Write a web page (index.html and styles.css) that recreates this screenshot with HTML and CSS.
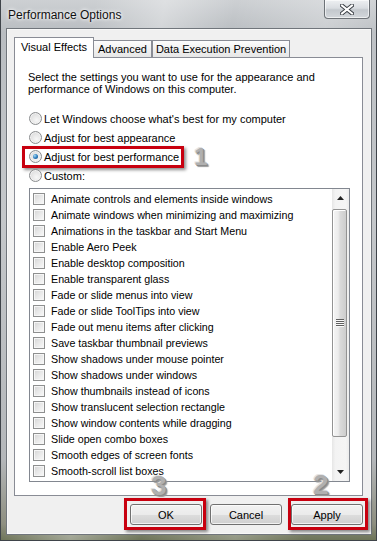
FILE: index.html
```html
<!DOCTYPE html>
<html lang="en">
<head>
<meta charset="utf-8">
<title>Performance Options</title>
<link rel="stylesheet" href="styles.css">
</head>
<body>
<div class="window">
  <div class="titlebar">
    <span class="title">Performance Options</span>
    <div class="close">
      <svg width="14" height="11" viewBox="0 0 14 11">
        <path d="M2 1.5 L12 9.5 M12 1.5 L2 9.5" stroke="#3a3f45" stroke-width="4" stroke-linecap="square" fill="none"/>
        <path d="M2 1.5 L12 9.5 M12 1.5 L2 9.5" stroke="#ffffff" stroke-width="2" stroke-linecap="square" fill="none"/>
      </svg>
    </div>
  </div>
  <div class="client">
    <div class="tabs">
      <div class="tab tab-active tab-visual">Visual Effects</div>
      <div class="tab tab-advanced">Advanced</div>
      <div class="tab tab-dep">Data Execution Prevention</div>
    </div>
    <div class="panel">
      <p class="intro">Select the settings you want to use for the appearance and<br>performance of Windows on this computer.</p>
      <div class="radios">
        <label class="radio"><span class="rb"></span>Let Windows choose what's best for my computer</label>
        <label class="radio"><span class="rb"></span>Adjust for best appearance</label>
        <label class="radio radio-hl"><span class="rb rb-on"></span>Adjust for best performance</label>
        <label class="radio"><span class="rb"></span>Custom:</label>
      </div>
      <div class="listbox">
        <ul class="items">
          <li class="item"><span class="cb"></span>Animate controls and elements inside windows</li>
          <li class="item"><span class="cb"></span>Animate windows when minimizing and maximizing</li>
          <li class="item"><span class="cb"></span>Animations in the taskbar and Start Menu</li>
          <li class="item"><span class="cb"></span>Enable Aero Peek</li>
          <li class="item"><span class="cb"></span>Enable desktop composition</li>
          <li class="item"><span class="cb"></span>Enable transparent glass</li>
          <li class="item"><span class="cb"></span>Fade or slide menus into view</li>
          <li class="item"><span class="cb"></span>Fade or slide ToolTips into view</li>
          <li class="item"><span class="cb"></span>Fade out menu items after clicking</li>
          <li class="item"><span class="cb"></span>Save taskbar thumbnail previews</li>
          <li class="item"><span class="cb"></span>Show shadows under mouse pointer</li>
          <li class="item"><span class="cb"></span>Show shadows under windows</li>
          <li class="item"><span class="cb"></span>Show thumbnails instead of icons</li>
          <li class="item"><span class="cb"></span>Show translucent selection rectangle</li>
          <li class="item"><span class="cb"></span>Show window contents while dragging</li>
          <li class="item"><span class="cb"></span>Slide open combo boxes</li>
          <li class="item"><span class="cb"></span>Smooth edges of screen fonts</li>
          <li class="item"><span class="cb"></span>Smooth-scroll list boxes</li>
        </ul>
        <div class="scrollbar">
          <div class="sb-btn"><svg width="7" height="4" viewBox="0 0 7 4"><path d="M0 4 L3.5 0 L7 4 Z" fill="#222"/></svg></div>
          <div class="thumb"><span class="grip"></span></div>
          <div class="track"></div>
          <div class="sb-btn"><svg width="7" height="4" viewBox="0 0 7 4"><path d="M0 0 L7 0 L3.5 4 Z" fill="#222"/></svg></div>
        </div>
      </div>
    </div>
    <div class="buttons">
      <button class="btn btn-ok">OK</button>
      <button class="btn">Cancel</button>
      <button class="btn btn-apply">Apply</button>
    </div>
  </div>
  <span class="mark mark-1">1</span>
  <span class="mark mark-2">2</span>
  <span class="mark mark-3">3</span>
</div>
</body>
</html>
```
FILE: styles.css
```css
* { box-sizing: border-box; }
html, body { margin: 0; padding: 0; }
body {
  width: 377px;
  height: 541px;
  overflow: hidden;
  font-family: "Liberation Sans", Arial, sans-serif;
  font-size: 11px;
  color: #000;
  background: #5d6650;
}
.window {
  position: relative;
  width: 377px;
  height: 541px;
  border: 1px solid #3f444a;
  border-top: none;
  padding: 0 5px 6px 6px;
  display: flex;
  flex-direction: column;
  background:
    linear-gradient(100deg, rgba(255,255,255,0) 20%, rgba(255,255,255,0.35) 35%, rgba(255,255,255,0) 50%, rgba(255,255,255,0.25) 70%, rgba(255,255,255,0) 85%),
    linear-gradient(180deg, #cdd0d3 0%, #b9bdc1 6%, #c4c7ca 40%, #b4b7ba 85%, #8e8f80 97%, #6d7458 100%);
}
.titlebar {
  height: 29px;
  flex: none;
  display: flex;
  align-items: flex-start;
  justify-content: space-between;
}
.title {
  font-family: "Liberation Sans", Arial, sans-serif;
  font-size: 12px;
  line-height: 14px;
  margin: 8px 0 0 1px;
  color: #111;
  text-shadow: 0 0 5px #fff, 0 0 3px #fff;
}
.close {
  width: 46px;
  height: 19px;
  margin-right: 1px;
  border: 1px solid #6d7277;
  border-top: none;
  border-radius: 0 0 4px 4px;
  background: linear-gradient(180deg, #eef0f2 0%, #d9dde1 45%, #c3c8cd 55%, #d3d7db 100%);
  box-shadow: inset 0 0 0 1px rgba(255,255,255,0.6);
  display: flex;
  align-items: center;
  justify-content: center;
}
.client {
  flex: 1;
  background: #f0f0f0;
  border: 1px solid #f8f8f8;
  box-shadow: 0 0 0 1px #70757b;
  padding: 7px 7px 0 6px;
  display: flex;
  flex-direction: column;
}
.tabs {
  display: flex;
  align-items: flex-end;
  height: 20px;
  flex: none;
}
.tab {
  height: 17px;
  border: 1px solid #898c95;
  border-bottom: none;
  background: linear-gradient(180deg, #fdfdfd 0%, #f1f1f1 50%, #e6e6e6 100%);
  display: flex;
  align-items: center;
  justify-content: center;
  line-height: 14px;
  white-space: nowrap;
}
.tab-active {
  height: 21px;
  margin-bottom: -1px;
  position: relative;
  z-index: 1;
  background: #fff;
  padding-bottom: 2px;
}
.tab-visual { width: 80px; }
.tab-advanced { width: 58px; border-left: none; }
.tab-dep { width: 138px; margin-left: 0; }
.panel {
  height: 439px;
  flex: none;
  background: #fff;
  border: 1px solid #898c95;
  padding: 13px 12px 0 13px;
}
.intro {
  margin: 0;
  line-height: 12px;
  white-space: nowrap;
}
.radios {
  margin-top: 14px;
  display: flex;
  flex-direction: column;
  align-items: flex-start;
}
.radio {
  height: 19px;
  display: inline-flex;
  align-items: center;
  position: relative;
  white-space: nowrap;
}
.rb {
  width: 13px;
  height: 13px;
  margin: 0 2px 0 1px;
  border-radius: 50%;
  border: 1px solid #8b8d8f;
  background: radial-gradient(circle at 60% 65%, #f7f7f7 0%, #e4e4e4 55%, #cfcfcf 100%);
  box-shadow: inset 0 0 0 1px #f2f2f2;
  position: relative;
}
.rb-on::after {
  content: "";
  position: absolute;
  left: 3px;
  top: 3px;
  width: 5px;
  height: 5px;
  border-radius: 50%;
  background: radial-gradient(circle at 35% 35%, #a7d9f5 0%, #2e7fbf 50%, #164a80 100%);
}
.radio-hl::after {
  content: "";
  position: absolute;
  left: -6px;
  right: -5px;
  top: -1px;
  bottom: -2px;
  border: 3px solid #c8000f;
  box-shadow: 2px 2px 3px rgba(0,0,0,0.45);
}
.listbox {
  margin: 3px 0 0 1px;
  width: 321px;
  height: 294px;
  border: 1px solid #828790;
  display: flex;
}
.items {
  list-style: none;
  margin: 0;
  padding: 2px 0 0 0;
  flex: 1;
  font-size: 10.7px;
}
.item {
  height: 16px;
  display: flex;
  align-items: center;
  padding-left: 3px;
  white-space: nowrap;
}
.cb {
  width: 12px;
  height: 12px;
  margin-right: 6px;
  border: 1px solid #8e8f8f;
  background: linear-gradient(135deg, #d4d4d4 0%, #e9e9e9 50%, #f9f9f9 100%);
  box-shadow: inset 0 0 0 1px #f6f6f6;
  flex: none;
}
.scrollbar {
  width: 17px;
  flex: none;
  display: flex;
  flex-direction: column;
  background: linear-gradient(90deg, #e6e6e6 0%, #f3f3f3 20%, #f5f5f5 80%, #ececec 100%);
}
.sb-btn {
  height: 18px;
  flex: none;
  display: flex;
  align-items: center;
  justify-content: center;
}
.thumb {
  height: 228px;
  margin: 2px 2px 0 0;
  flex: none;
  border: 1px solid #939393;
  border-radius: 2px;
  background: linear-gradient(90deg, #f5f5f5 0%, #ececec 40%, #dadada 55%, #cdcdcd 100%);
  box-shadow: inset 1px 1px 0 #fff;
  display: flex;
  align-items: center;
  justify-content: center;
}
.grip {
  width: 8px;
  height: 8px;
  background: repeating-linear-gradient(180deg, #5f5f5f 0, #5f5f5f 1px, #fafafa 1px, #fafafa 2px);
}
.track { flex: 1; }
.buttons {
  margin-top: 8px;
  display: flex;
  justify-content: flex-end;
  gap: 8px;
  flex: none;
}
.btn {
  width: 72px;
  height: 21px;
  padding: 0;
  font-family: "Liberation Sans", Arial, sans-serif;
  font-size: 11px;
  color: #000;
  border: 1px solid #707070;
  border-radius: 3px;
  background: linear-gradient(180deg, #f2f2f2 0%, #ebebeb 50%, #dddddd 51%, #cfcfcf 100%);
  box-shadow: inset 0 0 0 1px rgba(255,255,255,0.7);
  position: relative;
}
.btn-apply { margin-left: 1px; }
.btn-ok::after, .btn-apply::after {
  content: "";
  position: absolute;
  border: 3px solid #c8000f;
  box-shadow: 2px 2px 3px rgba(0,0,0,0.45);
}
.btn-ok::after { left: -7px; right: -5px; top: -7px; bottom: -6px; }
.btn-apply::after { left: -4px; right: -6px; top: -7px; bottom: -6px; }
.mark {
  position: absolute;
  font-family: "Liberation Sans", Arial, sans-serif;
  font-weight: bold;
  color: #b0b0b0;
  text-shadow: 1px 1px 0 #8a8a8a, 2px 2px 1px #9a9a9a, -1px -1px 0 #e4e4e4;
  line-height: 20px;
}
.mark-1 { left: 193px; top: 148px; font-size: 24px; line-height: 17px; }
.mark-2 { left: 312px; top: 475px; font-size: 28px; }
.mark-3 { left: 150px; top: 476px; font-size: 28px; }
```
